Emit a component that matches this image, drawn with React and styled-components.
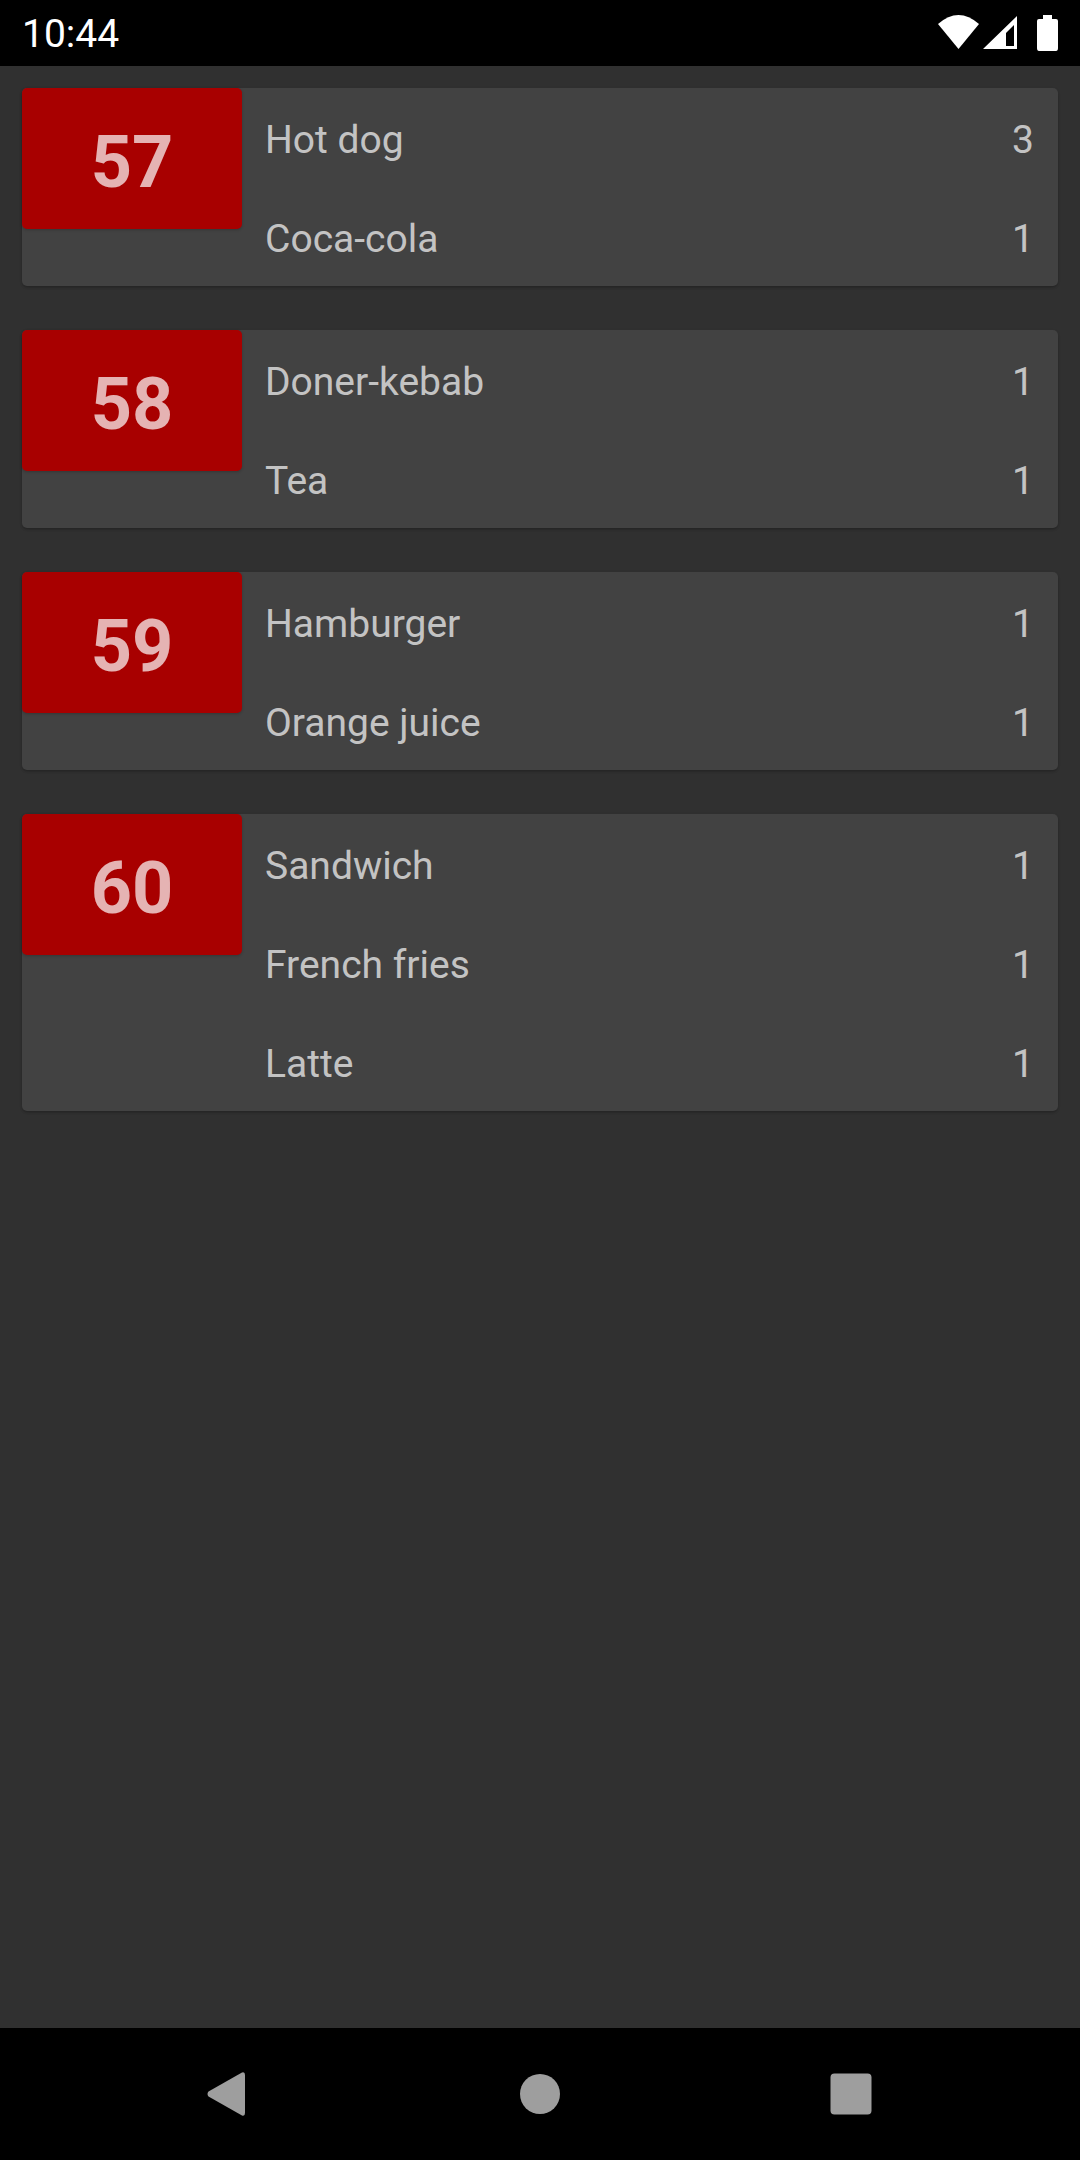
import React from "react";
import styled, { createGlobalStyle } from "styled-components";

const Global = createGlobalStyle`
  html, body { margin: 0; padding: 0; background: #303030; }
  * { box-sizing: border-box; }
`;

const Screen = styled.div`
  width: 1080px;
  height: 2160px;
  display: flex;
  flex-direction: column;
  background: #303030;
  font-family: Roboto, "Liberation Sans", sans-serif;
`;

const StatusBar = styled.header`
  height: 66px;
  flex: none;
  background: #000;
  color: #fff;
  display: flex;
  align-items: center;
  justify-content: space-between;
  padding: 0 22px;
  font-size: 39px;
`;

const Time = styled.span`
  line-height: 66px;
  padding-top: 1px;
`;

const StatusIcons = styled.svg`
  display: block;
  width: 122px;
  height: 40px;
  fill: #fff;
`;

const List = styled.main`
  flex: 1;
  display: flex;
  flex-direction: column;
  gap: 44px;
  padding: 22px;
`;

const Card = styled.article`
  display: flex;
  align-items: flex-start;
  background: #424242;
  border-radius: 5px;
  box-shadow: 0 2px 3px -1px rgba(0, 0, 0, 0.2), 0 1px 3px rgba(0, 0, 0, 0.12);
`;

const Badge = styled.div`
  flex: none;
  width: 220px;
  height: 141px;
  padding-top: 8px;
  display: flex;
  align-items: center;
  justify-content: center;
  background: #a80000;
  border-radius: 5px;
  box-shadow: 0 1px 3px rgba(0, 0, 0, 0.2);
  color: rgba(255, 255, 255, 0.7);
  font-size: 72px;
  font-weight: 700;
`;

const Items = styled.ul`
  flex: 1;
  list-style: none;
  margin: 0;
  padding: 0 24px 0 23px;
`;

const Item = styled.li`
  height: 99px;
  padding-top: 4px;
  display: flex;
  align-items: center;
  justify-content: space-between;
  color: rgba(255, 255, 255, 0.7);
  font-size: 39px;
`;

const NavBar = styled.nav`
  height: 132px;
  flex: none;
  background: #000;
  display: grid;
  grid-template-columns: repeat(3, 44px);
  justify-content: center;
  column-gap: 267px;
  align-items: center;
`;

const NavIcon = styled.svg`
  display: block;
  width: 44px;
  height: 44px;
  fill: #9e9e9e;
`;

const orders = [
  { id: 57, items: [["Hot dog", 3], ["Coca-cola", 1]] },
  { id: 58, items: [["Doner-kebab", 1], ["Tea", 1]] },
  { id: 59, items: [["Hamburger", 1], ["Orange juice", 1]] },
  { id: 60, items: [["Sandwich", 1], ["French fries", 1], ["Latte", 1]] },
];

export default function App() {
  return (
    <Screen>
      <Global />
      <StatusBar>
        <Time>10:44</Time>
        <StatusIcons viewBox="936 13 122 40">
          <path d="M938 24 Q958.5 6 979 24 L958.5 49 Z" />
          <path
            fillRule="evenodd"
            d="M983 49 L1017 16 V49 Z M1006 46 H1014 V25 L1006 33 Z"
          />
          <path d="M1037 21 Q1037 19 1039 19 H1043 V15 H1052 V19 H1056 Q1058 19 1058 21 V48 Q1058 51 1056 51 H1039 Q1037 51 1037 48 Z" />
        </StatusIcons>
      </StatusBar>
      <List>
        {orders.map((o) => (
          <Card key={o.id}>
            <Badge>{o.id}</Badge>
            <Items>
              {o.items.map(([name, qty]) => (
                <Item key={name}>
                  <span>{name}</span>
                  <span>{qty}</span>
                </Item>
              ))}
            </Items>
          </Card>
        ))}
      </List>
      <NavBar>
        <NavIcon viewBox="0 0 44 44">
          <path d="M35 0.5 Q38 -0.5 38 3 V41 Q38 44.5 35 43.5 L1.5 24.5 Q-0.5 22 1.5 19.5 Z" />
        </NavIcon>
        <NavIcon viewBox="0 0 44 44">
          <circle cx="22" cy="22" r="20" />
        </NavIcon>
        <NavIcon viewBox="0 0 44 44">
          <rect x="1.5" y="1.5" width="41" height="41" rx="4" />
        </NavIcon>
      </NavBar>
    </Screen>
  );
}
